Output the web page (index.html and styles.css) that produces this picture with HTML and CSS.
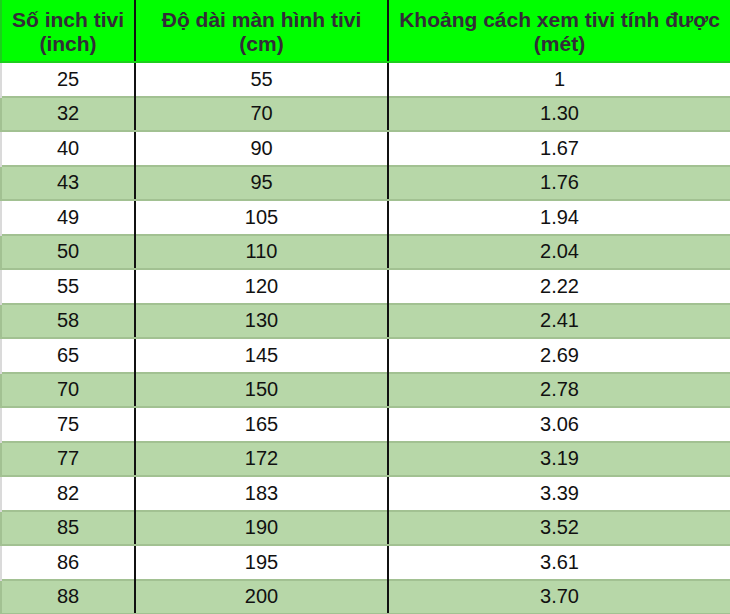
FILE: index.html
```html
<!DOCTYPE html>
<html>
<head>
<meta charset="utf-8">
<link rel="stylesheet" href="styles.css">
</head>
<body>
<table class="tv">
  <colgroup><col class="c1"><col class="c2"><col class="c3"></colgroup>
  <thead>
    <tr><th>Số inch tivi<br>(inch)</th><th>Độ dài màn hình tivi<br>(cm)</th><th>Khoảng cách xem tivi tính được<br>(mét)</th></tr>
  </thead>
  <tbody>
    <tr class="w"><td>25</td><td>55</td><td>1</td></tr>
    <tr class="g"><td>32</td><td>70</td><td>1.30</td></tr>
    <tr class="w"><td>40</td><td>90</td><td>1.67</td></tr>
    <tr class="g"><td>43</td><td>95</td><td>1.76</td></tr>
    <tr class="w"><td>49</td><td>105</td><td>1.94</td></tr>
    <tr class="g"><td>50</td><td>110</td><td>2.04</td></tr>
    <tr class="w"><td>55</td><td>120</td><td>2.22</td></tr>
    <tr class="g"><td>58</td><td>130</td><td>2.41</td></tr>
    <tr class="w"><td>65</td><td>145</td><td>2.69</td></tr>
    <tr class="g"><td>70</td><td>150</td><td>2.78</td></tr>
    <tr class="w"><td>75</td><td>165</td><td>3.06</td></tr>
    <tr class="g"><td>77</td><td>172</td><td>3.19</td></tr>
    <tr class="w"><td>82</td><td>183</td><td>3.39</td></tr>
    <tr class="g"><td>85</td><td>190</td><td>3.52</td></tr>
    <tr class="w"><td>86</td><td>195</td><td>3.61</td></tr>
    <tr class="g"><td>88</td><td>200</td><td>3.70</td></tr>
  </tbody>
</table>
</body>
</html>
```
FILE: styles.css
```css
html, body {
  margin: 0;
  padding: 0;
  background: #ffffff;
}
body {
  width: 730px;
  height: 614px;
  overflow: hidden;
  font-family: "Liberation Sans", Arial, sans-serif;
}
.tv {
  width: 730px;
  border-collapse: collapse;
  table-layout: fixed;
}
.c1 { width: 134px; }
.c2 { width: 253px; }
.c3 { width: 343px; }
.tv th {
  height: 62px;
  box-sizing: border-box;
  padding: 2px 0 0;
  background: #00ff00;
  border-bottom: 2px solid #1bd01b;
  color: #332c38;
  font-size: 21px;
  font-weight: bold;
  line-height: 24px;
  text-align: center;
  vertical-align: middle;
}
.tv td {
  height: 34.5px;
  box-sizing: border-box;
  padding: 0;
  color: #111111;
  font-size: 20px;
  text-align: center;
  vertical-align: middle;
}
.tv th + th, .tv td + td {
  border-left: 2px solid #111111;
}
.tv tr > :first-child {
  border-left: 2px solid #dadada;
}
.tv tr > :last-child {
  border-right: 2px solid #dadada;
}
.tv .g td {
  background: #b7d7a8;
  border-top: 2px solid #a2c192;
  border-bottom: 2px solid #a2c192;
}
.tv .g td:first-child { border-left-color: #a2c192; }
.tv .g td:last-child { border-right-color: #a2c192; }
.tv thead th:first-child { border-left-color: #1bd01b; }
.tv thead th:last-child { border-right-color: #1bd01b; }
```
